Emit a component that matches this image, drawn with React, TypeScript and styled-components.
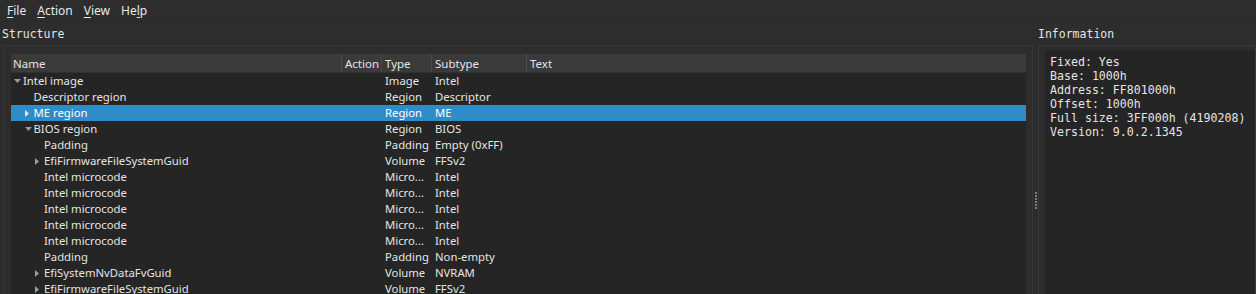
import React from "react";
import styled, { createGlobalStyle } from "styled-components";

const Global = createGlobalStyle`
  html, body { margin: 0; padding: 0; background: #2d2d2d; overflow: hidden; }
  body { width: 1256px; height: 294px; }
  #root { height: 294px; }
`;

const Window = styled.div`
  display: flex;
  flex-direction: column;
  width: 1256px;
  height: 294px;
  background: #2d2d2d;
  color: #e4e4e4;
  font-family: "Noto Sans", "Segoe UI", sans-serif;
  font-size: 11.3px;
  overflow: hidden;
`;

const MenuBar = styled.div`
  display: flex;
  height: 21px;
  border-bottom: 1px solid #282828;
  padding-left: 7px;
  align-items: center;
  font-size: 12px;
`;

const MenuItem = styled.span`
  margin-right: 11px;
  color: #e8e8e8;
  u { text-decoration: underline; text-underline-offset: 2px; }
`;

const Docks = styled.div`
  display: flex;
  flex: 1;
  min-height: 0;
`;

const Dock = styled.div<{ $w?: number }>`
  display: flex;
  flex-direction: column;
  ${(p) => (p.$w ? `width: ${p.$w}px; flex: none;` : "flex: 1;")}
  min-width: 0;
`;

const DockTitle = styled.div<{ $pl: number }>`
  height: 23px;
  line-height: 24px;
  padding-left: ${(p) => p.$pl}px;
  font-family: "DejaVu Sans Mono", monospace;
  font-size: 11.5px;
  color: #e4e4e4;
`;

const Frame = styled.div<{ $pad: string; $ml: number }>`
  flex: 1;
  margin-left: ${(p) => p.$ml}px;
  border: 1px solid #383838;
  border-bottom: none;
  padding: ${(p) => p.$pad};
  display: flex;
  min-height: 0;
`;

const Tree = styled.div`
  flex: 1;
  background: #252525;
  display: flex;
  flex-direction: column;
  overflow: hidden;
`;

const cols = "330px 40px 50px 95px 1fr";

const Header = styled.div`
  display: grid;
  grid-template-columns: ${cols};
  height: 18px;
  background: #3a3a3a;
  border-bottom: 1px solid #303030;
  flex: none;
  font-size: 11.5px;
`;

const HeadCell = styled.div<{ $first?: boolean }>`
  padding-left: ${(p) => (p.$first ? 2 : 3)}px;
  line-height: 19px;
  border-left: ${(p) => (p.$first ? "none" : "1px solid #4a4a4a")};
  white-space: nowrap;
  overflow: hidden;
`;

const Row = styled.div<{ $sel?: boolean }>`
  display: grid;
  grid-template-columns: ${cols};
  height: 16px;
  line-height: 16px;
  flex: none;
  background: ${(p) => (p.$sel ? "#308cc6" : "transparent")};
  color: ${(p) => (p.$sel ? "#ffffff" : "#e4e4e4")};
`;

const NameCell = styled.div<{ $level: number }>`
  display: flex;
  align-items: center;
  padding-left: ${(p) => 2 + p.$level * 10.5}px;
  white-space: nowrap;
  overflow: hidden;
`;

const ArrowBox = styled.span`
  width: 10px;
  flex: none;
  display: flex;
  align-items: center;
  justify-content: flex-start;
  padding-left: 1px;
  box-sizing: border-box;
`;

const Cell = styled.div<{ $pl: number }>`
  padding-left: ${(p) => p.$pl}px;
  white-space: nowrap;
  overflow: hidden;
`;

const Splitter = styled.div`
  width: 5px;
  flex: none;
  display: flex;
  flex-direction: column;
  align-items: flex-end;
  padding-top: 170px;
  gap: 1px;
`;

const Dot = styled.span`
  width: 2px;
  height: 2px;
  background: #7a7a7a;
  margin-right: 1px;
`;

const InfoText = styled.pre`
  flex: 1;
  margin: 0;
  background: #252525;
  padding: 5px 0 0 5px;
  font-family: "DejaVu Sans Mono", monospace;
  font-size: 11.6px;
  line-height: 14px;
  color: #e4e4e4;
`;

type RowData = {
  name: string;
  level: number;
  arrow?: "down" | "right";
  type: string;
  sub: string;
  sel?: boolean;
};

const rows: RowData[] = [
  { name: "Intel image", level: 0, arrow: "down", type: "Image", sub: "Intel" },
  { name: "Descriptor region", level: 1, type: "Region", sub: "Descriptor" },
  { name: "ME region", level: 1, arrow: "right", type: "Region", sub: "ME", sel: true },
  { name: "BIOS region", level: 1, arrow: "down", type: "Region", sub: "BIOS" },
  { name: "Padding", level: 2, type: "Padding", sub: "Empty (0xFF)" },
  { name: "EfiFirmwareFileSystemGuid", level: 2, arrow: "right", type: "Volume", sub: "FFSv2" },
  { name: "Intel microcode", level: 2, type: "Micro...", sub: "Intel" },
  { name: "Intel microcode", level: 2, type: "Micro...", sub: "Intel" },
  { name: "Intel microcode", level: 2, type: "Micro...", sub: "Intel" },
  { name: "Intel microcode", level: 2, type: "Micro...", sub: "Intel" },
  { name: "Intel microcode", level: 2, type: "Micro...", sub: "Intel" },
  { name: "Padding", level: 2, type: "Padding", sub: "Non-empty" },
  { name: "EfiSystemNvDataFvGuid", level: 2, arrow: "right", type: "Volume", sub: "NVRAM" },
  { name: "EfiFirmwareFileSystemGuid", level: 2, arrow: "right", type: "Volume", sub: "FFSv2" },
];

const Arrow = ({ dir, sel }: { dir?: "down" | "right"; sel?: boolean }) => {
  if (!dir) return <ArrowBox />;
  const fill = sel ? "#dde9f3" : "#9a9a9a";
  return (
    <ArrowBox>
      {dir === "down" ? (
        <svg width="7" height="4" viewBox="0 0 7 4">
          <path d="M0 0 H7 L3.5 4 Z" fill={fill} />
        </svg>
      ) : (
        <svg width="4" height="7" viewBox="0 0 4 7">
          <path d="M0 0 L4 3.5 L0 7 Z" fill={fill} />
        </svg>
      )}
    </ArrowBox>
  );
};

const info = `Fixed: Yes
Base: 1000h
Address: FF801000h
Offset: 1000h
Full size: 3FF000h (4190208)
Version: 9.0.2.1345`;

export default function App() {
  return (
    <Window>
      <Global />
      <MenuBar>
        <MenuItem><u>F</u>ile</MenuItem>
        <MenuItem><u>A</u>ction</MenuItem>
        <MenuItem><u>V</u>iew</MenuItem>
        <MenuItem>He<u>l</u>p</MenuItem>
      </MenuBar>
      <Docks>
        <Dock $w={1033}>
          <DockTitle $pl={2}>Structure</DockTitle>
          <Frame $ml={3} $pad="8px 6px 0 7px">
            <Tree>
              <Header>
                <HeadCell $first>Name</HeadCell>
                <HeadCell>Action</HeadCell>
                <HeadCell>Type</HeadCell>
                <HeadCell>Subtype</HeadCell>
                <HeadCell>Text</HeadCell>
              </Header>
              {rows.map((r, i) => (
                <Row key={i} $sel={r.sel}>
                  <NameCell $level={r.level}>
                    <Arrow dir={r.arrow} sel={r.sel} />
                    {r.name}
                  </NameCell>
                  <Cell $pl={3}></Cell>
                  <Cell $pl={4}>{r.type}</Cell>
                  <Cell $pl={4}>{r.sub}</Cell>
                  <Cell $pl={4}></Cell>
                </Row>
              ))}
            </Tree>
          </Frame>
        </Dock>
        <Splitter>
          {Array.from({ length: 6 }).map((_, i) => (
            <Dot key={i} />
          ))}
        </Splitter>
        <Dock>
          <DockTitle $pl={0}>Information</DockTitle>
          <Frame $ml={0} $pad="4px 0 0 6px">
            <InfoText>{info}</InfoText>
          </Frame>
        </Dock>
      </Docks>
    </Window>
  );
}
